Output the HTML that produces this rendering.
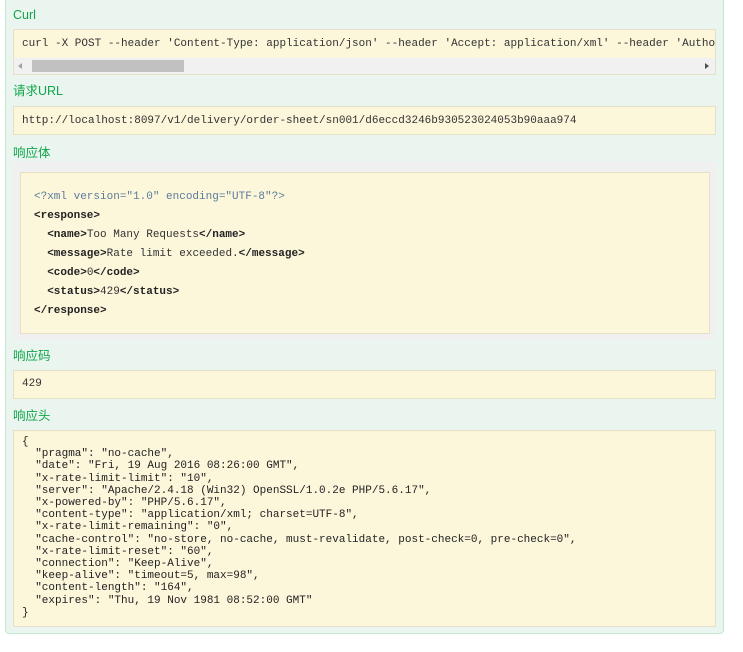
<!DOCTYPE html>
<html><head><meta charset="utf-8"><style>
body{margin:0;width:743px;height:652px;background:#fff;overflow:hidden;font-family:"Liberation Sans","Noto Sans CJK SC",sans-serif;}
.wrap{position:absolute;left:5px;top:-6px;width:717px;height:639px;background:#ebf5f0;border:1px solid #c3e8d1;border-top:none;border-radius:0 0 4px 4px;}
.lbl{position:absolute;left:13px;color:#10a54a;font-size:12.5px;line-height:14px;}
.box{position:absolute;left:13px;width:701px;background:#fcf6db;border:1px solid #e5e0c6;font-family:"Liberation Mono",monospace;font-size:11px;color:#333;white-space:pre;overflow:hidden;}
.b{font-weight:bold;color:#222;} .p{color:#5b7d9a}
</style></head><body>
<div class="wrap"></div>
<div class="lbl" style="top:8px">Curl</div>
<div class="box" style="top:29px;height:44px;">
 <div style="position:absolute;left:8px;top:8px;">curl -X POST --header 'Content-Type: application/json' --header 'Accept: application/xml' --header 'Authorization'</div>
 <div style="position:absolute;left:0;top:28px;width:701px;height:16px;background:#f1f1f1"></div>
 <div style="position:absolute;left:18px;top:30px;width:152px;height:12px;background:#c1c1c1"></div>
 <div style="position:absolute;left:4px;top:33px;width:0;height:0;border:3px solid transparent;border-right:4px solid #a3a3a3;border-left:0"></div>
 <div style="position:absolute;left:691px;top:33px;width:0;height:0;border:3px solid transparent;border-left:4px solid #505050;border-right:0"></div>
</div>
<div class="lbl" style="top:84px">请求URL</div>
<div class="box" style="top:106px;height:27px;"><div style="position:absolute;left:8px;top:8px">http://localhost:8097/v1/delivery/order-sheet/sn001/d6eccd3246b930523024053b90aaa974</div></div>
<div class="lbl" style="top:146px">响应体</div>
<div style="position:absolute;left:13px;top:162px;width:703px;height:178px;background:#f0f0f0"></div>
<div class="box" style="left:20px;top:172px;width:688px;height:160px;line-height:19px;">
<div style="position:absolute;left:13px;top:15px"><span class="p">&lt;?xml version="1.0" encoding="UTF-8"?&gt;</span>
<span class="b">&lt;response&gt;</span>
  <span class="b">&lt;name&gt;</span>Too Many Requests<span class="b">&lt;/name&gt;</span>
  <span class="b">&lt;message&gt;</span>Rate limit exceeded.<span class="b">&lt;/message&gt;</span>
  <span class="b">&lt;code&gt;</span>0<span class="b">&lt;/code&gt;</span>
  <span class="b">&lt;status&gt;</span>429<span class="b">&lt;/status&gt;</span>
<span class="b">&lt;/response&gt;</span></div></div>
<div class="lbl" style="top:349px">响应码</div>
<div class="box" style="top:370px;height:27px;"><div style="position:absolute;left:8px;top:7px">429</div></div>
<div class="lbl" style="top:409px">响应头</div>
<div class="box" style="top:430px;height:195px;font-size:11px;line-height:12.2px;color:#222"><div style="position:absolute;left:8px;top:5px">{
  "pragma": "no-cache",
  "date": "Fri, 19 Aug 2016 08:26:00 GMT",
  "x-rate-limit-limit": "10",
  "server": "Apache/2.4.18 (Win32) OpenSSL/1.0.2e PHP/5.6.17",
  "x-powered-by": "PHP/5.6.17",
  "content-type": "application/xml; charset=UTF-8",
  "x-rate-limit-remaining": "0",
  "cache-control": "no-store, no-cache, must-revalidate, post-check=0, pre-check=0",
  "x-rate-limit-reset": "60",
  "connection": "Keep-Alive",
  "keep-alive": "timeout=5, max=98",
  "content-length": "164",
  "expires": "Thu, 19 Nov 1981 08:52:00 GMT"
}</div></div>
</body></html>
